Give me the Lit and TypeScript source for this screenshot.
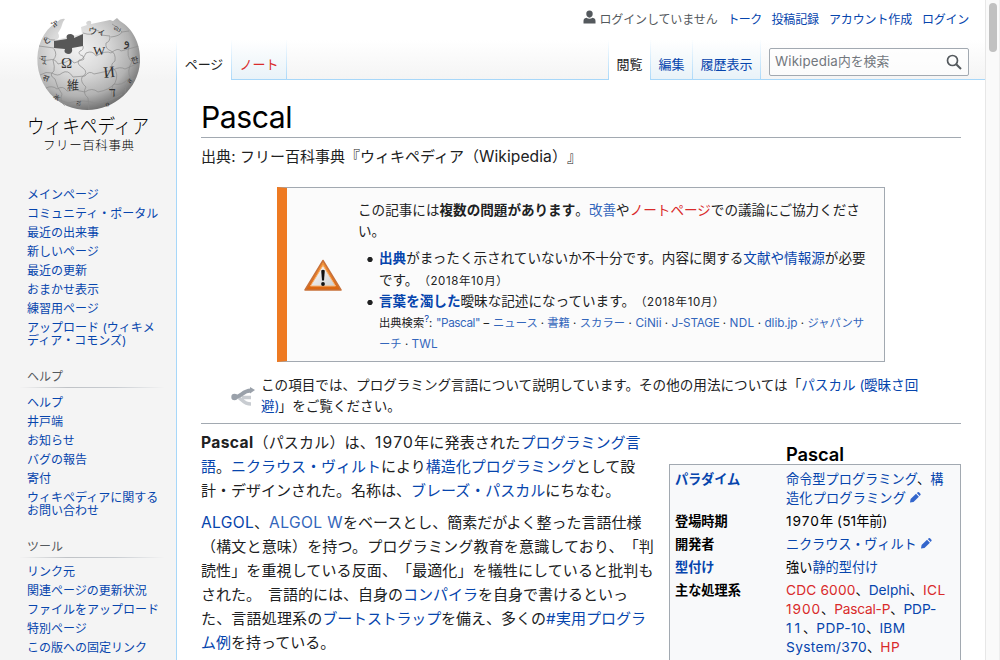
import { LitElement, html, css, svg } from "lit";
import { customElement, property } from "lit/decorators.js";

/** A run of text that is tracked out or in until it takes the given advance width. */
@customElement("fit-text")
class FitText extends LitElement {
  @property({ type: Number }) w = 0;
  static styles = css`
    :host { display: inline; white-space: pre; }
  `;
  firstUpdated() {
    const n = (this.textContent || "").length;
    const natural = this.getBoundingClientRect().width;
    if (n && natural && this.w) this.style.letterSpacing = `${(this.w - natural) / n}px`;
  }
  render() {
    return html`<slot></slot>`;
  }
}

const fit = (w: number, t: string) => html`<fit-text w=${w}>${t}</fit-text>`;
const latin = (w: number, t: string) => html`<fit-text class="latin" w=${w}>${t}</fit-text>`;
const a = (t: unknown) => html`<a>${t}</a>`;
const red = (t: unknown) => html`<a class="new">${t}</a>`;
const ext = (t: unknown) => html`<a class="ext">${t}</a>`;
const line = (...t: unknown[]) => html`<span class="line">${t}</span>`;

const mainNav = [["メインページ"], ["コミュニティ・ポータル"], ["最近の出来事"], ["新しいページ"], ["最近の更新"], ["おまかせ表示"], ["練習用ページ"], ["アップロード (ウィキメ", "ディア・コモンズ)"]];
const helpNav = [["ヘルプ"], ["井戸端"], ["お知らせ"], ["バグの報告"], ["寄付"], ["ウィキペディアに関する", "お問い合わせ"]];
const toolNav = [["リンク元"], ["関連ページの更新状況"], ["ファイルをアップロード"], ["特別ページ"], ["この版への固定リンク"]];

const globe = svg`
  <defs>
    <radialGradient id="ball" cx="0.4" cy="0.34" r="0.68">
      <stop offset="0" stop-color="#f2f2f2"/><stop offset="0.4" stop-color="#dadada"/>
      <stop offset="0.75" stop-color="#b2b2b2"/><stop offset="1" stop-color="#6e6e6e"/>
    </radialGradient>
    <clipPath id="edge"><path d="M62 19 C24 38 25 88 66 107 C101 120 137 95 139 62 C140 43 131 28 117 19 L112 22 L109 26 L91 24 L89 21 L85 22 L86 26 L80 27 L81 34 L55 42 L54 39 Q58 38 57 34 L64 22 Z"/></clipPath>
  </defs>
  <g transform="translate(1 0)">
  <path fill="url(#ball)" d="M64 19 Q60 18 56 22 C27 39 30 90 66 106 C101 120 137 95 139 62 C140 43 131 28 119 21 L116 18 L112 21 L109 20 L90 24 Q91 20 87 21 Q84 22 86 25 L80 27 L81 34 L71 36 L55 40 Q60 38 57 33 L60 28 L62 22 Z"/>
  <path fill="#575757" d="M53 41 L66 39 Q64 34 70 34 Q74 35 73 38 L82 34 L82 46 L71 48 Q72 54 67 54 Q62 53 64 49 L53 48 Z"/>
  <g clip-path="url(#edge)" fill="none" stroke="#8b8b8b" stroke-width="0.7">
    <path d="M53 49 Q57 55 52 60 Q54 67 53 71 Q47 75 54 79 Q56 88 61 94 Q58 101 64 106"/>
    <path d="M82 46 Q83 50 79 51 Q76 54 82 56 Q85 61 78 60 Q75 64 82 68 Q88 73 81 77 Q79 82 85 87 Q81 93 87 98 L88 110"/>
    <path d="M82 33 Q91 36 93 32 Q98 28 100 35 L109 36 Q109 42 105 43 Q104 49 110 51 Q115 53 114 61 Q108 65 113 69 Q118 74 114 83 Q109 87 111 100"/>
    <path d="M38 58 Q44 62 48 60 Q54 58 57 64 L65 62 Q70 58 73 63 Q82 61 85 53 Q92 50 95 56 Q105 50 110 53 Q117 47 120 51 L138 46"/>
    <path d="M39 75 Q45 71 51 73 Q57 77 61 73 Q67 69 72 77 L84 76 Q88 70 93 74 L112 70 Q119 66 124 69 L140 62"/>
    <path d="M45 88 Q51 85 56 89 Q62 85 66 91 Q76 89 84 92 Q91 87 97 92 Q108 90 113 84 Q121 86 127 79 L136 78"/>
    <path d="M45 37 Q49 41 54 40 M38 46 L53 48 M110 37 Q119 36 121 32 L128 31 M121 32 Q117 27 111 24"/>
    <path d="M49 99 Q60 99 67 103 Q83 99 94 103 Q108 102 121 94 M128 46 Q125 57 131 62 Q125 71 130 79 Q124 84 124 93"/>
  </g>
  <g class="signs" fill="#333">
    <text x="60" y="68" font-size="15">Ω</text>
    <text x="92" y="55" font-size="13">W</text>
    <text x="103" y="78" font-size="16" transform="rotate(-6 103 78)">И</text>
    <text x="66" y="90" font-size="12">維</text>
    <text x="87" y="34" font-size="9" transform="rotate(4 87 34)">ウィ</text>
    <text x="108" y="97" font-size="14">ד</text>
    <text x="123" y="46" font-size="13" transform="rotate(-12 123 46)">و</text>
    <text x="112" y="29" font-size="8" transform="rotate(25 112 29)">வ</text>
    <text x="44" y="43" font-size="9" transform="rotate(-35 44 43)">ع</text>
    <text x="40" y="62" font-size="9">যু</text>
    <text x="41" y="80" font-size="9" transform="rotate(20 41 80)">स</text>
    <text x="53" y="28" font-size="7" transform="rotate(-40 53 28)">Ⴟ</text>
    <text x="75" y="105" font-size="8" transform="rotate(10 75 105)">ನ</text>
    <text x="131" y="64" font-size="8" transform="rotate(-15 131 64)">한</text>
    <text x="129" y="84" font-size="7" transform="rotate(-50 129 84)">ส</text>
    <text x="52" y="97" font-size="7" transform="rotate(40 52 97)">Ж</text>
    <text x="105" y="107" font-size="7" transform="rotate(-15 105 107)">ი</text>
  </g></g>`;

const pencil = html`<svg class="pencil" viewBox="0 0 11 11" width="11" height="11"><path fill="#36c" d="M0 10.500 L0.600 7 L6 1.800 L8.900 4.700 L3.500 10 Z M6.800 1.100 L7.800 0.200 Q8.400 -0.200 9 0.300 L10.400 1.700 Q10.900 2.400 10.400 3 L9.600 3.900 Z"/></svg>`;

@customElement("app-root")
class AppRoot extends LitElement {
  static styles = css`
    :host {
      display: block; height: 660px; width: 1000px; overflow: hidden; background: #fff; color: #202122;
      font-family: "Inter", "Noto Sans CJK JP", sans-serif; text-spacing-trim: space-all; font-size: 15px;
    }
    * { box-sizing: border-box; }
    a { color: #0645ad; text-decoration: none; }
    a.ext { color: #3366bb; }
    a.new { color: #d92b2b; }
    .latin { font-size: 104%; line-height: 0; }
    .page { display: grid; grid-template-columns: 176px 809px 15px; height: 660px; }
    .line { display: block; white-space: pre; }

    .side { background: linear-gradient(#fff 40px, #f4f4f4 80px); font-size: 12px; overflow: hidden; }
    .logo { display: block; width: 176px; height: 160px; }
    .signs { font-family: "Liberation Serif", "DejaVu Serif", "Noto Sans CJK JP", serif; }
    .mark { font-family: "Noto Sans CJK JP", sans-serif; font-weight: 300; fill: #000; }
    .nav { list-style: none; margin: 0; padding: 0 0 0 27px; line-height: 13px; }
    .nav.first { padding-top: 28px; }
    .nav li { margin-bottom: 6px; }
    .head { margin: 23px 12px 7.500px 20px; padding: 0 0 4px 7px; line-height: 13px; color: #54595d;
      border-bottom: 1px solid; border-image: linear-gradient(to right, rgba(200,204,209,0), #bfc2c6 33%, #c8ccd1 66%, rgba(200,204,209,0)) 1; }

    .main { display: flex; flex-direction: column; min-width: 0; height: 660px; overflow: hidden; }
    .top { height: 80px; flex: none; background: linear-gradient(#fff 40px, #f4f4f4 80px); display: flex; flex-direction: column; }
    .personal { height: 40px; display: flex; justify-content: flex-end; gap: 10px; padding: 10px 16px 0 0; font-size: 12px; line-height: 20px; }
    .personal span { color: #54595d; display: flex; gap: 4px; }
    .bar { height: 40px; display: flex; }
    .tab { border-right: 1px solid; border-image: linear-gradient(#fff, #a7d7f9) 1; border-left: 0; border-top: 0; border-bottom: 0;
      font-size: 13px; line-height: 20px; padding: 14px 0 0; text-align: center; height: 40px; flex: none; white-space: nowrap;
      background: linear-gradient(#a7d7f9, #a7d7f9) left bottom / 100% 1px no-repeat, linear-gradient(#fff, #e8f2f8); }
    .tab.on { background: #fff; color: #202122; }
    .edge { width: 1px; height: 40px; background: linear-gradient(#fff, #a7d7f9); }
    .t1 { width: 55px; } .t2 { width: 55px; } .t3 { width: 42px; } .t4 { width: 42px; } .t5 { width: 68px; }
    .fill { flex: 1; border-bottom: 1px solid #a7d7f9; }
    .find { width: 224px; border-bottom: 1px solid #a7d7f9; padding: 8px 0 0 8px; }
    .box { width: 200px; height: 28px; border: 1px solid #a2a9b1; border-radius: 2px; background: rgba(255,255,255,.6);
      display: flex; justify-content: space-between; padding: 0 6px 0 5px; font-size: 12.8px; line-height: 25px; color: #72777d; }
    .box svg { margin-top: 5px; }

    .article { border-left: 1px solid #a7d7f9; flex: 1; padding: 20px 24px 0; min-height: 0; }
    h1 { margin: 0; height: 38px; border-bottom: 1px solid #a2a9b1; font-weight: 400; font-size: 29px; line-height: 36px; color: #000; }
    .sub { line-height: 24px; margin-top: 7px; }
    .issue { margin: 18px 0 0 76px; width: 608px; height: 175px; border: 1px solid #a2a9b1; border-left: 10px solid #ee7a22; background: #fbfbfb;
      display: flex; font-size: 13.590px; line-height: 21.400px; }
    .icon { width: 71px; flex: none; display: flex; padding: 71px 0 0 17px; }
    .issue p { margin: 12px 0 5.500px; }
    .issue ul { margin: 0; padding: 0; list-style: none; }
    .issue li { padding-left: 21px; background: radial-gradient(circle at 12px 11.500px, #202122 2.300px, transparent 3px) no-repeat; }
    .issue small { font-size: 11.500px; line-height: 0; }
    .small { font-size: 11.300px; }
    sup { font-size: 9.500px; line-height: 0; vertical-align: 5px; }
    .hat { display: flex; padding: 13px 0 5px 30px; font-size: 13.590px; line-height: 21.400px; height: 62px; border-bottom: 1px solid #a2a9b1; }
    .hat svg { margin: 11px 5px 0 0; flex: none; }
    .body { display: flex; justify-content: space-between; }
    .text { line-height: 24px; padding-top: 7px; }
    .text p { margin: 0 0 8px; }
    .infobox { width: 292px; padding-top: 21px; color: #000; }
    .name { font-size: 17.600px; font-weight: 600; line-height: 20px; padding-left: 117px; height: 19px; }
    .rows { border: 1px solid #a2a9b1; background: #f8f9fa; height: 220px; padding: 5px; font-size: 13.200px; line-height: 19px; }
    .row { display: grid; grid-template-columns: 111px 1fr; margin-bottom: 4px; }
    .row b { font-weight: 700; }
    .pencil { margin-left: 4px; vertical-align: 0; }

    .scroll { background: #fafafa; border-left: 1px solid #e7e7e7; border-right: 1px solid #eee; padding: 3px 0 0 3px; }
    .thumb { width: 8px; height: 49px; border-radius: 4px; background: #c1c1c1; }
  `;

  nav(items: string[][], first = false) {
    return html`<ul class="nav ${first ? "first" : ""}">${items.map((ls) => html`<li><a>${ls.map((l) => line(l))}</a></li>`)}</ul>`;
  }

  row(label: unknown, ...value: unknown[]) {
    return html`<div class="row"><b>${label}</b><div>${value}</div></div>`;
  }

  render() {
    return html`<div class="page">
      <nav class="side">
        <svg class="logo" viewBox="0 0 176 160">${globe}
          <text class="mark" x="27" y="133.500" font-size="20" textLength="122" lengthAdjust="spacingAndGlyphs">ウィキペディア</text>
          <text class="mark" x="43" y="150" font-size="12.500" textLength="91">フリー百科事典</text>
        </svg>
        ${this.nav(mainNav, true)}
        <div class="head">ヘルプ</div>${this.nav(helpNav)}
        <div class="head">ツール</div>${this.nav(toolNav)}
      </nav>
      <main class="main">
        <header class="top">
          <div class="personal">
            <span><svg width="13" height="14" viewBox="0 0 13 14"><path fill="#54595d" d="M6.500 0.500 a3.400 3.400 0 0 1 3.200 3.600 c0 2-1.400 3.600-3.200 3.600 S3.300 6.100 3.300 4.100 A3.400 3.400 0 0 1 6.500 0.500 Z M0.500 13.500 V11 Q0.500 8.300 3.400 7.800 Q6.500 9.600 9.600 7.800 Q12.500 8.300 12.500 11 V13.500 Z"/></svg>${fit(118, "ログインしていません")}</span>
            <a>${fit(34, "トーク")}</a><a>${fit(47.5, "投稿記録")}</a><a>${fit(83, "アカウント作成")}</a><a>${fit(47, "ログイン")}</a>
          </div>
          <div class="bar">
            <i class="edge"></i>
            <div class="tab on t1">ページ</div>
            <div class="tab t2"><a class="new">ノート</a></div>
            <div class="fill"></div>
            <i class="edge"></i>
            <div class="tab on t3">閲覧</div>
            <div class="tab t4"><a>編集</a></div>
            <div class="tab t5"><a>履歴表示</a></div>
            <div class="find"><div class="box"><span>${latin(63, "Wikipedia")}内を検索</span>
              <svg width="16" height="16" viewBox="0 0 16 16" fill="none" stroke="#54595d"><circle cx="6.500" cy="6.500" r="5" stroke-width="1.700"/><path d="M10.200 10.200 L15 15" stroke-width="2"/></svg></div></div>
          </div>
        </header>
        <article class="article">
          <h1>${latin(91, "Pascal")}</h1>
          <div class="sub">${line(fit(39, "出典: "), "フリー百科事典『ウィキペディア（", latin(73, "Wikipedia"), "）』")}</div>
          <section class="issue">
            <div class="icon"><svg width="38" height="33" viewBox="0 0 38 33">
              <defs><linearGradient id="warn" x1="0" y1="0" x2="0" y2="1"><stop offset="0" stop-color="#f79a3c"/><stop offset="1" stop-color="#d9640f"/></linearGradient>
              <linearGradient id="pale" x1="0" y1="0" x2="1" y2="1"><stop offset="0" stop-color="#fff"/><stop offset="1" stop-color="#cfcfcf"/></linearGradient></defs>
              <path d="M19 1.500 L37 31 H1 Z" fill="url(#warn)" stroke="#c8713a" stroke-width="1.500" stroke-linejoin="round"/>
              <path d="M19 6.500 L31.500 27 H6.500 Z" fill="url(#pale)" stroke="#f9b679" stroke-width="1" stroke-linejoin="round"/>
              <path d="M17.200 11.500 Q19 10 20.800 11.500 L20 21.500 H18 Z" fill="#111"/><circle cx="19" cy="25" r="1.900" fill="#111"/></svg></div>
            <div>
              <p>${line("この記事には", html`<b>複数の問題があります</b>`, "。", ext("改善"), "や", red("ノートページ"), "での議論にご協力くださ")}${line("い。")}</p>
              <ul>
                <li>${line(html`<b>${a("出典")}</b>`, "がまったく示されていないか不十分です。内容に関する", a("文献や情報源"), "が必要")}${line("です。", html`<small>${fit(90, "（2018年10月）")}</small>`)}</li>
                <li>${line(html`<b>${a("言葉を濁した")}</b>`, "曖昧な記述になっています。", html`<small>${fit(90, "（2018年10月）")}</small>`)}
                  <div class="small">${line("出典検索", html`<sup>${a("?")}</sup>`, fit(7, ": "), ext(latin(44, '"Pascal"')), fit(13, " – "), ext("ニュース"), fit(9.5, " · "), ext("書籍"), fit(10, " · "), ext("スカラー"), fit(10.5, " · "), ext(latin(26, "CiNii")), fit(10, " · "), ext(latin(48, "J-STAGE")), fit(10, " · "), ext(latin(25, "NDL")), fit(10, " · "), ext(latin(33, "dlib.jp")), fit(10, " · "), ext("ジャパンサ"))}${line(ext("ーチ"), fit(10, " · "), ext(latin(26, "TWL")))}</div></li>
              </ul>
            </div>
          </section>
          <div class="hat">
            <svg width="25" height="22" viewBox="0 0 25 22" fill="none"><path d="M5 11 C11 11 11 18 20 18 M11 11.500 H20" stroke="#c8ccd1" stroke-width="3.500"/><path d="M3 11 C12 11 10 5 20 4.500" stroke="#9aa1aa" stroke-width="4"/><path d="M19 1 L24 4 L19 7.500 Z" fill="#9aa1aa"/><circle cx="3.500" cy="11" r="3.200" fill="#9aa1aa"/></svg>
            <div>${line("この項目では、プログラミング言語について説明しています。その他の用法については「", a(html`パスカル ${fit(4.5, "(")}曖昧さ回`))}${line(a(html`避${fit(4, ")")}`), "」をご覧ください。")}</div>
          </div>
          <div class="body">
            <div class="text">
              <p>${line(html`<b>${latin(52.5, "Pascal")}</b>`, fit(121.5, "（パスカル）は、"), latin(39, "1970"), fit(106.5, "年に発表された"), a("プログラミング言"))}${line(a("語"), "。", a("ニクラウス・ヴィルト"), "により", a("構造化プログラミング"), "として設")}${line("計・デザインされた。名称は、", a("ブレーズ・パスカル"), "にちなむ。")}</p>
              <p>${line(a(latin(53, "ALGOL")), "、", ext(latin(74, "ALGOL W")), "をベースとし、簡素だがよく整った言語仕様")}${line(fit(453, "（構文と意味）を持つ。プログラミング教育を意識しており、「判"))}${line(fit(452.5, "読性」を重視している反面、「最適化」を犠牲にしていると批判も"))}${line("された。", fit(7, " "), "言語的には、自身の", a("コンパイラ"), "を自身で書けるといっ")}${line(fit(121.5, "た、言語処理系の"), a(fit(118.5, "ブートストラップ")), "を備え、多くの", a(html`${fit(10, "#")}実用プログラ`))}${line(a("ム例"), "を持っている。")}</p>
            </div>
            <aside class="infobox">
              <div class="name">${latin(58, "Pascal")}</div>
              <div class="rows">
                ${this.row(a(fit(65, "パラダイム")), line(a("命令型プログラミング"), "、", a("構")), line(a(fit(120, "造化プログラミング")), pencil))}
                ${this.row("登場時期", line(latin(34, "1970"), "年", latin(23, " (51"), "年前", fit(5, ")")))}
                ${this.row("開発者", line(a(fit(130.5, "ニクラウス・ヴィルト")), pencil))}
                ${this.row(a("型付け"), line("強い", a("静的型付け")))}
                ${this.row("主な処理系",
                  line(red(latin(69.5, "CDC 6000")), "、", a(latin(41, "Delphi")), "、", red(latin(23, "ICL"))),
                  line(red(latin(35, "1900")), "、", red(latin(56, "Pascal-P")), "、", a(latin(33, "PDP-"))),
                  line(a(latin(17, "11")), "、", a(latin(50, "PDP-10")), "、", a(latin(26, "IBM"))),
                  line(a(latin(81, "System/370")), "、", red(latin(20, "HP"))))}
              </div>
            </aside>
          </div>
        </article>
      </main>
      <div class="scroll"><div class="thumb"></div></div>
    </div>`;
  }
}
